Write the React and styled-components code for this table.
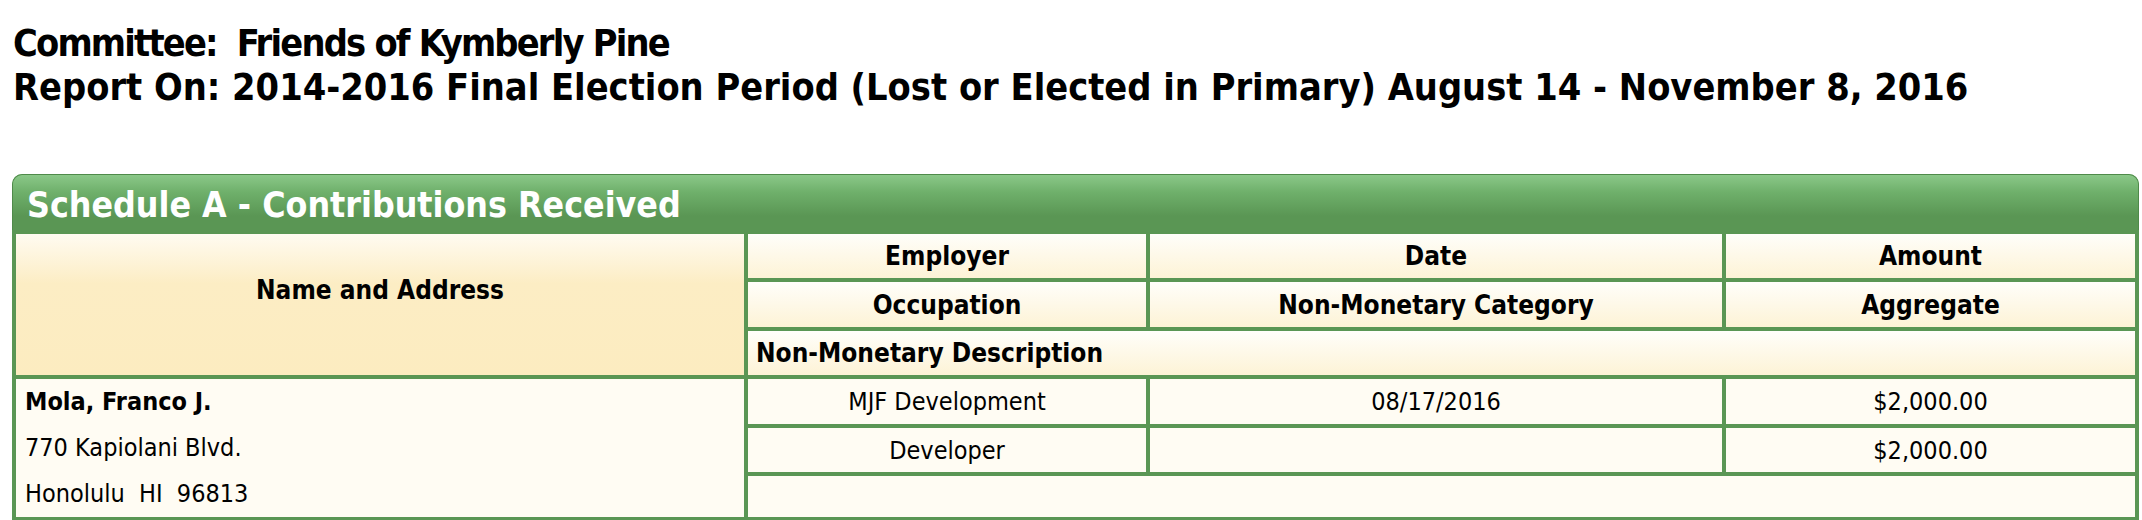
import { createGlobalStyle } from 'styled-components';
import styled from 'styled-components';

const GlobalStyle = createGlobalStyle`
    html, body {
        margin: 0;
        padding: 0;
        background: #ffffff;
    }
    body {
        font-family: 'DejaVu Sans Condensed', 'DejaVu Sans', sans-serif;
        color: #000000;
    }
`;

const green = '#5a9654';

const contribution = {
    name: 'Mola, Franco J.',
    street: '770 Kapiolani Blvd.',
    city: 'Honolulu  HI  96813',
    employer: 'MJF Development',
    occupation: 'Developer',
    date: '08/17/2016',
    category: '',
    amount: '$2,000.00',
    aggregate: '$2,000.00',
    description: '',
};

const App = () => {
    const c = contribution;
    return (
        <>
            <GlobalStyle />
            <Page>
                <ReportHeading>
                    <HeadingLine $tight>
                        Committee:&nbsp; Friends of Kymberly Pine
                    </HeadingLine>
                    <HeadingLine>
                        Report On: 2014-2016 Final Election Period (Lost or
                        Elected in Primary) August 14 - November 8, 2016
                    </HeadingLine>
                </ReportHeading>

                <Panel>
                    <TitleBar>Schedule A - Contributions Received</TitleBar>
                    <Table>
                        <colgroup>
                            <col style={{ width: 728 }} />
                            <col style={{ width: 398 }} />
                            <col style={{ width: 572 }} />
                            <col style={{ width: 409 }} />
                        </colgroup>
                        <thead>
                            <tr>
                                <NameHead rowSpan={3}>Name and Address</NameHead>
                                <HeadCell $h={44}>Employer</HeadCell>
                                <HeadCell>Date</HeadCell>
                                <HeadCell>Amount</HeadCell>
                            </tr>
                            <tr>
                                <HeadCell $h={45}>Occupation</HeadCell>
                                <HeadCell>Non-Monetary Category</HeadCell>
                                <HeadCell>Aggregate</HeadCell>
                            </tr>
                            <tr>
                                <HeadCell $h={44} $left colSpan={3}>
                                    Non-Monetary Description
                                </HeadCell>
                            </tr>
                        </thead>
                        <tbody>
                            <tr>
                                <NameCell rowSpan={3}>
                                    <strong>{c.name}</strong>
                                    <span>{c.street}</span>
                                    <span>{c.city}</span>
                                </NameCell>
                                <DataCell $h={44}>{c.employer}</DataCell>
                                <DataCell>{c.date}</DataCell>
                                <DataCell>{c.amount}</DataCell>
                            </tr>
                            <tr>
                                <DataCell $h={44}>{c.occupation}</DataCell>
                                <DataCell>{c.category}</DataCell>
                                <DataCell>{c.aggregate}</DataCell>
                            </tr>
                            <tr>
                                <DataCell $h={40} $left colSpan={3}>
                                    {c.description}
                                </DataCell>
                            </tr>
                        </tbody>
                    </Table>
                </Panel>
            </Page>
        </>
    );
};

export default App;

const Page = styled.div`
    padding: 21px 3px 2px 12px;
`;

const ReportHeading = styled.div`
    padding-left: 1px;
    font-size: 37.6px;
    font-weight: bold;
    line-height: 44px;
    margin-bottom: 65px;
    white-space: nowrap;
`;

const HeadingLine = styled.div`
    letter-spacing: ${(p) => (p.$tight ? '-1.8px' : 'normal')};
`;

const Panel = styled.div`
    background: ${green};
    border-radius: 10px 10px 0 0;
    overflow: hidden;
`;

const TitleBar = styled.div`
    height: 60px;
    display: flex;
    align-items: center;
    padding-left: 15px;
    color: #ffffff;
    font-size: 35.4px;
    font-weight: bold;
    background: linear-gradient(
        to bottom,
        #8cc98a 0%,
        #6fb06b 30%,
        #5a9654 70%,
        #5a9654 100%
    );
    box-shadow: inset 0 0 0 1px #4f8a4a;
    border-radius: 10px 10px 0 0;
`;

const Table = styled.table`
    width: 100%;
    table-layout: fixed;
    border-collapse: separate;
    border-spacing: 4px;
    margin-top: -4px;
    background: ${green};
    font-size: 25px;
`;

const HeadCell = styled.th`
    height: ${(p) => (p.$h ? `${p.$h}px` : 'auto')};
    padding: 0 8px;
    font-size: 26px;
    font-weight: bold;
    text-align: ${(p) => (p.$left ? 'left' : 'center')};
    vertical-align: middle;
    background: linear-gradient(to bottom, #fffefa 0%, #fdf3d6 100%);
    box-sizing: border-box;
`;

const NameHead = styled.th`
    padding: 0 8px 30px;
    font-size: 26px;
    font-weight: bold;
    text-align: center;
    vertical-align: middle;
    background: linear-gradient(
        to bottom,
        #fffbf1 0%,
        #fcedc4 35%,
        #fcecc0 100%
    );
`;

const DataCell = styled.td`
    height: ${(p) => (p.$h ? `${p.$h}px` : 'auto')};
    padding: 0 8px;
    text-align: ${(p) => (p.$left ? 'left' : 'center')};
    vertical-align: middle;
    background: #fffcf3;
    box-sizing: border-box;
`;

const NameCell = styled.td`
    padding: 0 9px;
    vertical-align: top;
    background: #fffcf3;

    strong,
    span {
        display: block;
        line-height: 46px;
        white-space: pre;
    }
`;
